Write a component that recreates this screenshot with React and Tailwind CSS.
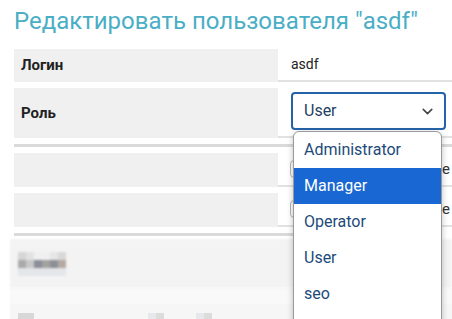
import { ChevronDown } from 'lucide-react';

const roles = ['Administrator', 'Manager', 'Operator', 'User', 'seo'];

export default function App() {
  return (
    <div className="relative w-[452px] h-[319px] overflow-hidden bg-white font-['Roboto',sans-serif]">
      {/* Title */}
      <h1 className="pl-[14px] pt-[6px] h-[49px] text-[24px] leading-[30px] text-[#4aaec5] whitespace-nowrap">
        Редактировать пользователя "asdf"
      </h1>

      <div className="pl-[14px] flex flex-col">
        {/* Login */}
        <div className="flex h-[33px]">
          <div className="w-[264px] bg-[#f0f0f0] flex items-center pl-[7px] text-[15px] font-bold text-[#222]">
            Логин
          </div>
          <div className="flex-1 border-b-2 border-[#e2e2e2] flex items-center pl-[13px] text-[14px] text-[#222]">
            asdf
          </div>
        </div>

        {/* Role */}
        <div className="flex h-[50px] mt-[6px]">
          <div className="w-[264px] bg-[#f0f0f0] flex items-center pl-[7px] text-[15px] font-bold text-[#222]">
            Роль
          </div>
          <div className="flex-1 border-b-2 border-[#e2e2e2] pl-[13px] pt-[4px]">
            <div className="w-[155px] h-[38px] rounded-[4px] border-2 border-[#2563a8] flex items-center pl-[11px] pr-[8px] text-[16px] text-[#1f3f63]">
              <span className="flex-1">User</span>
              <ChevronDown size={17} strokeWidth={2.2} className="text-[#444]" />
            </div>
          </div>
        </div>

        <div className="h-[3px] bg-[#dadada] mt-[6px]" />

        {/* Flags */}
        {[0, 1].map((i) => (
          <div key={i} className="flex h-[34px] mt-[6px]">
            <div className="w-[264px] bg-[#f0f0f0]" />
            <div className="flex-1 border-b-2 border-[#e2e2e2] flex items-center pl-[12px]">
              <div className="w-[20px] h-[18px] rounded-[4px] border border-[#b5b5b5] bg-white" />
              <span className="ml-auto pr-[2px] text-[15px] text-[#333]">Не</span>
            </div>
          </div>
        ))}

        <div className="h-[3px] bg-[#dadada] mt-[6px] w-[280px]" />

        {/* Blurred rest of the form */}
        <div className="flex h-[49px] mt-[3px] -ml-[4px] bg-[#f3f3f3] blur-[1px]">
          <div className="flex flex-col justify-center pl-[8px]">
            <div className="flex">
              <div className="w-[8px] h-[8px] bg-[#d6d6d6]" />
              <div className="w-[8px] h-[8px] bg-[#e2e2e2]" />
              <div className="w-[16px] h-[8px] bg-[#f0f0f0]" />
              <div className="w-[8px] h-[8px] bg-[#e6e6e6]" />
              <div className="w-[8px] h-[8px] bg-[#d8d8d8]" />
            </div>
            <div className="flex">
              <div className="w-[8px] h-[8px] bg-[#aaaaaa]" />
              <div className="w-[8px] h-[8px] bg-[#c8c8c8]" />
              <div className="w-[8px] h-[8px] bg-[#8a8f98]" />
              <div className="w-[8px] h-[8px] bg-[#a2a2a2]" />
              <div className="w-[8px] h-[8px] bg-[#8c9096]" />
              <div className="w-[8px] h-[8px] bg-[#b5aaa2]" />
            </div>
            <div className="flex">
              <div className="w-[48px] h-[8px] bg-[#e4e6ea]" />
            </div>
          </div>
        </div>
        <div className="h-[16px] -ml-[4px] bg-[#f9f9f9]" />
        <div className="flex h-[20px] -ml-[4px] bg-[#f6f6f6] pt-[9px] blur-[0.5px]">
          <div className="ml-[8px] w-[16px] h-[10px] bg-[#d8d8d8]" />
          <div className="ml-[114px] w-[8px] h-[10px] bg-[#e6e8ec]" />
          <div className="w-[8px] h-[10px] bg-[#dcdcdc]" />
          <div className="ml-[32px] w-[8px] h-[10px] bg-[#e6e8ec]" />
          <div className="w-[8px] h-[10px] bg-[#dcdcdc]" />
        </div>
      </div>

      {/* Open select list */}
      <ul className="absolute left-[293px] top-[131px] w-[149px] h-[200px] bg-white border border-[#9a9a9a] rounded-t-[6px] shadow-[0_2px_6px_rgba(0,0,0,0.25)] overflow-hidden">
        {roles.map((r) => (
          <li
            key={r}
            className={
              r === 'Manager'
                ? 'h-[36px] flex items-center pl-[10px] text-[16px] bg-[#1967d2] text-white'
                : 'h-[36px] flex items-center pl-[10px] text-[16px] text-[#1d4a7a]'
            }
          >
            {r}
          </li>
        ))}
      </ul>
    </div>
  );
}
